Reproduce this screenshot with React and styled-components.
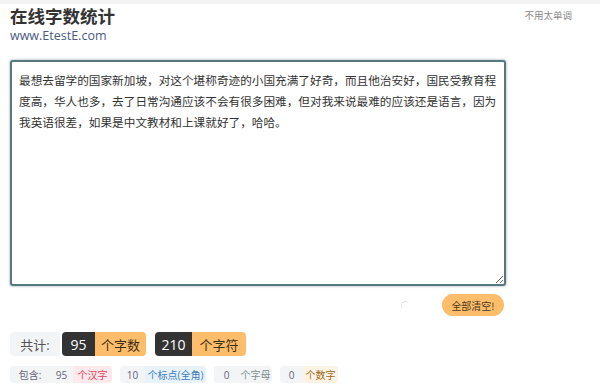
import { useState } from "react";
import styled, { createGlobalStyle } from "styled-components";

const Global = createGlobalStyle`
  body {
    margin: 0;
    background: #fff;
    font-family: "Noto Sans CJK SC", "Open Sans", sans-serif;
  }
`;

const TopBar = styled.div`
  height: 4px;
  background: #f4f4f4;
`;

const Header = styled.div`
  display: flex;
  justify-content: space-between;
  padding: 0 10px;
`;

const Brand = styled.div`
  display: flex;
  flex-direction: column;
`;

const Title = styled.h1`
  margin: 0;
  font-size: 17.5px;
  line-height: 24px;
  font-weight: bold;
  color: #333;
`;

const Site = styled.a`
  font-family: "Open Sans", "Noto Sans CJK SC", sans-serif;
  font-size: 12.5px;
  line-height: 16px;
  color: #4a5a85;
  text-decoration: none;
`;

const Slogan = styled.div`
  font-size: 9.5px;
  color: #888;
  margin: 4px 18px 0 0;
`;

const Main = styled.div`
  padding: 0 10px;
  margin-top: 16px;
  width: 496px;
`;

const TextBox = styled.textarea`
  display: block;
  box-sizing: border-box;
  width: 496px;
  height: 226px;
  padding: 7px 4px 7px 7px;
  border: 2px solid #587880;
  border-radius: 3px;
  box-shadow: 0 0 2px 1px #c9d6da;
  font-family: "Noto Sans CJK SC", sans-serif;
  font-size: 11.65px;
  line-height: 21px;
  color: #333;
  resize: both;
  outline: none;
`;

const Actions = styled.div`
  display: flex;
  justify-content: flex-end;
  align-items: center;
  gap: 32px;
  margin-top: 8px;
  padding-right: 2px;
`;

const Spinner = styled.span`
  width: 7px;
  height: 7px;
  border: 1.5px solid #e4e4e4;
  border-right-color: transparent;
  border-bottom-color: transparent;
  border-radius: 50%;
`;

const ClearButton = styled.button`
  background: #fdbd6a;
  color: #4d3a1c;
  border: none;
  border-radius: 11px;
  height: 22px;
  width: 62px;
  padding: 0;
  font-family: "Noto Sans CJK SC", sans-serif;
  font-size: 10px;
  cursor: pointer;
`;

const Row = styled.div`
  display: flex;
  align-items: center;
  gap: ${(p) => p.gap}px;
  margin-top: ${(p) => p.top}px;
`;

const Group = styled.div`
  display: flex;
  border-radius: 4px;
  overflow: hidden;
`;

const Cell = styled.span`
  display: flex;
  align-items: center;
  justify-content: center;
  height: ${(p) => p.h}px;
  width: ${(p) => p.w}px;
  box-sizing: border-box;
  font-size: ${(p) => p.size}px;
  background: ${(p) => p.bg};
  color: ${(p) => p.fg};
  font-family: "Open Sans", "Noto Sans CJK SC", sans-serif;
  white-space: nowrap;
`;

const Label = styled(Cell)`
  border-radius: 4px;
`;

const tones = {
  han: { bg: "#fde8ec", fg: "#e04660" },
  punct: { bg: "#e8f2fb", fg: "#3b7dbe" },
  letter: { bg: "#f2f4f5", fg: "#7b8c90" },
  digit: { bg: "#fdf3e4", fg: "#9c6a25" },
};

const initial =
  "最想去留学的国家新加坡，对这个堪称奇迹的小国充满了好奇，而且他治安好，国民受教育程度高，华人也多，去了日常沟通应该不会有很多困难，但对我来说最难的应该还是语言，因为我英语很差，如果是中文教材和上课就好了，哈哈。";

const App = () => {
  const [text, setText] = useState(initial);
  const han = (text.match(/[\u4e00-\u9fa5]/g) || []).length;
  const punct = (text.match(/[\uff0c\u3002\uff01\uff1f\uff1b\uff1a\u3001\u201c\u201d]/g) || []).length;
  const letters = (text.match(/[a-zA-Z]/g) || []).length;
  const digits = (text.match(/[0-9]/g) || []).length;
  const words = han + letters + digits;
  // wide characters count as two
  const chars = text.length + han + punct;

  const details = [
    { n: han, label: "个汉字", tone: "han", nw: 23, lw: 39 },
    { n: punct, label: "个标点(全角)", tone: "punct", nw: 25, lw: 61 },
    { n: letters, label: "个字母", tone: "letter", nw: 25, lw: 33 },
    { n: digits, label: "个数字", tone: "digit", nw: 23, lw: 35 },
  ];

  return (
    <>
      <Global />
      <TopBar />
      <Header>
        <Brand>
          <Title>在线字数统计</Title>
          <Site href="#">www.EtestE.com</Site>
        </Brand>
        <Slogan>不用太单调</Slogan>
      </Header>
      <Main>
        <TextBox value={text} onChange={(e) => setText(e.target.value)} />
        <Actions>
          <Spinner />
          <ClearButton onClick={() => setText("")}>全部清空!</ClearButton>
        </Actions>
        <Row gap={2} top={16}>
          <Label h={24} w={50} size={13} bg="#f3f4f6" fg="#555">
            共计:
          </Label>
          <Group>
            <Cell h={24} w={33} size={14} bg="#333" fg="#fff">{words}</Cell>
            <Cell h={24} w={51} size={13} bg="#fdbd6a" fg="#3d2d14">个字数</Cell>
          </Group>
          <Group style={{ marginLeft: 7 }}>
            <Cell h={24} w={37} size={14} bg="#333" fg="#fff">{chars}</Cell>
            <Cell h={24} w={54} size={13} bg="#fdbd6a" fg="#3d2d14">个字符</Cell>
          </Group>
        </Row>
        <Row gap={8} top={10}>
          {details.map((d, i) => (
            <Group key={d.tone}>
              {i === 0 && (
                <Cell h={17} w={40} size={10} bg="#f3f4f6" fg="#667">包含:</Cell>
              )}
              <Cell h={17} w={d.nw} size={10} bg="#f3f4f6" fg="#667">{d.n}</Cell>
              <Cell h={17} w={d.lw} size={10} bg={tones[d.tone].bg} fg={tones[d.tone].fg}>
                {d.label}
              </Cell>
            </Group>
          ))}
        </Row>
      </Main>
    </>
  );
};

export default App;
